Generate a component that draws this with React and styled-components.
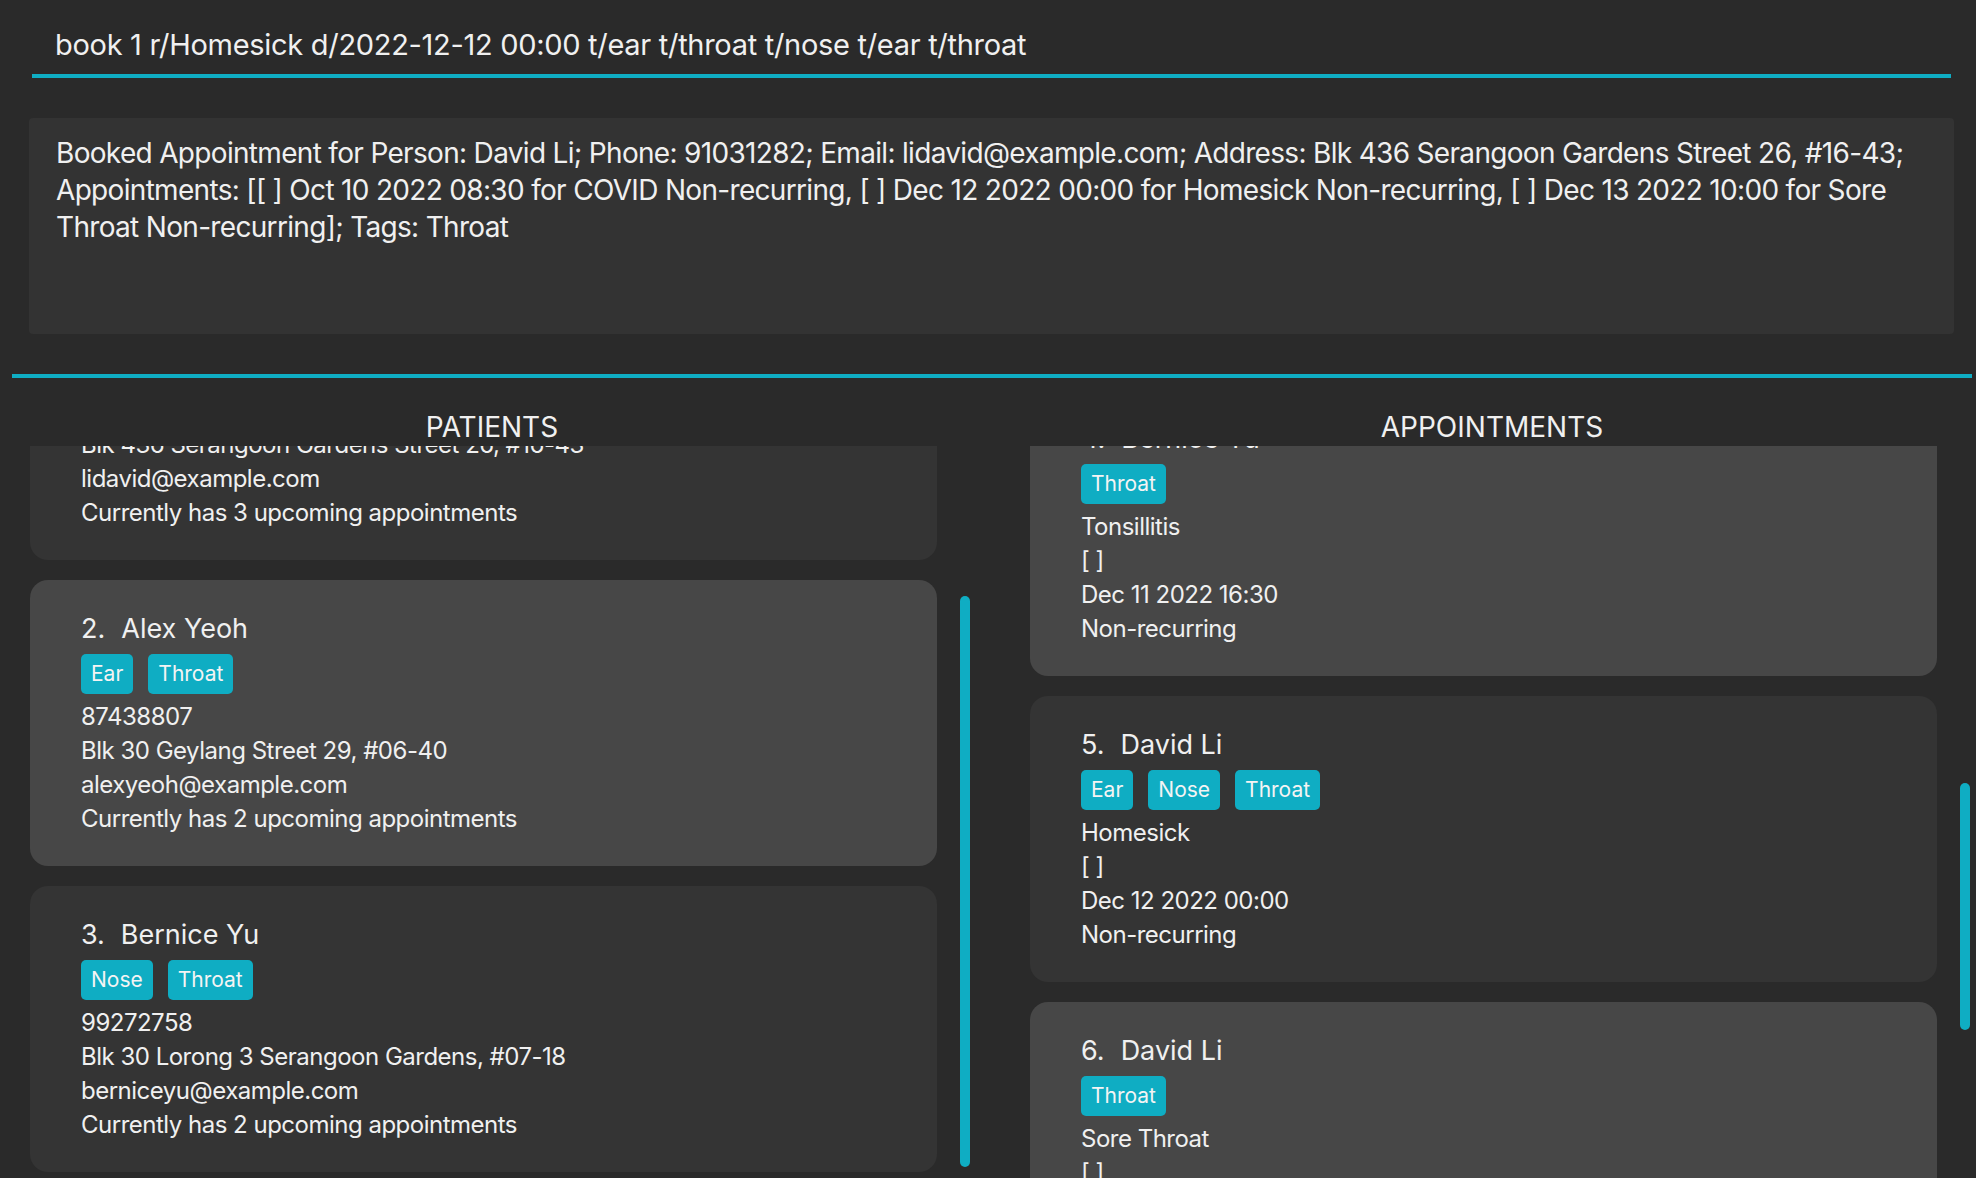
import { useLayoutEffect, useRef, useState } from "react"
import styled, { createGlobalStyle } from "styled-components"

const CYAN = "#0fadc3"

const GlobalStyle = createGlobalStyle`
  html, body {
    margin: 0;
    padding: 0;
    background: #2a2a2a;
    overflow: hidden;
  }
  body {
    font-family: Inter, "Noto Sans", sans-serif;
    color: #f0f0f0;
  }
`

const Window = styled.div`
  height: 1178px;
  display: flex;
  flex-direction: column;
`

const CommandBox = styled.div`
  margin: 0 25px 0 32px;
  padding: 28px 0 12px 23px;
  border-bottom: 4px solid ${CYAN};
  font-size: 29px;
  line-height: 34px;
  letter-spacing: -0.3px;
  white-space: nowrap;
`

const ResultBox = styled.div`
  margin: 40px 22px 0 29px;
  height: 216px;
  box-sizing: border-box;
  padding: 17px 27px;
  background: #333333;
  border-radius: 4px;
  font-size: 28px;
  line-height: 37px;
  letter-spacing: -0.68px;
`

const Divider = styled.div`
  margin: 40px 4px 0 12px;
  height: 4px;
  background: ${CYAN};
`

const Panels = styled.div`
  flex: 1;
  min-height: 0;
  display: grid;
  grid-template-columns: 960px 960px;
  column-gap: 40px;
  margin-left: 12px;
`

const Column = styled.section`
  display: flex;
  flex-direction: column;
  min-height: 0;
`

const Title = styled.h2`
  margin: 0;
  padding: 32px 0 2px;
  text-align: center;
  font-size: 28px;
  line-height: 34px;
  font-weight: 400;
`

const ListBody = styled.div`
  flex: 1;
  min-height: 0;
  display: flex;
`

const Scroller = styled.div`
  flex: 1;
  min-width: 0;
  overflow: hidden;
  padding: 20px 21px 20px 18px;
  display: flex;
  flex-direction: column;
  gap: 20px;
`

const Track = styled.div`
  position: relative;
  width: 14px;
  flex: none;
`

const Thumb = styled.div`
  position: absolute;
  left: 2px;
  width: 10px;
  border-radius: 5px;
  background: ${CYAN};
`

const Card = styled.div`
  flex: none;
  background: ${p => (p.$light ? "#474747" : "#343434")};
  border-radius: 18px;
  padding: 32px 40px 30px 51px;
`

const Name = styled.div`
  font-size: 27px;
  line-height: 34px;
  display: flex;
  gap: 16px;
`

const Tags = styled.div`
  margin: 8px 0 6px;
  display: flex;
  gap: 15px;
`

const Tag = styled.span`
  background: ${CYAN};
  color: #f4f4f4;
  height: 40px;
  padding: 0 10px;
  border-radius: 5px;
  font-size: 21px;
  line-height: 40px;
`

const Line = styled.div`
  font-size: 24px;
  line-height: 34px;
  letter-spacing: -0.5px;
`

const patients = [
  { name: "David Li", tags: ["Throat"], phone: "91031282", address: "Blk 436 Serangoon Gardens Street 26, #16-43", email: "lidavid@example.com", count: 3 },
  { name: "Alex Yeoh", tags: ["Ear", "Throat"], phone: "87438807", address: "Blk 30 Geylang Street 29, #06-40", email: "alexyeoh@example.com", count: 2 },
  { name: "Bernice Yu", tags: ["Nose", "Throat"], phone: "99272758", address: "Blk 30 Lorong 3 Serangoon Gardens, #07-18", email: "berniceyu@example.com", count: 2 },
]

const appointments = [
  { name: "David Li", tags: ["Throat"], reason: "COVID", date: "Oct 10 2022 08:30" },
  { name: "Alex Yeoh", tags: ["Ear"], reason: "Ear Infection", date: "Nov 02 2022 14:00" },
  { name: "Bernice Yu", tags: ["Nose"], reason: "Sinusitis", date: "Nov 21 2022 09:15" },
  { name: "Bernice Yu", tags: ["Throat"], reason: "Tonsillitis", date: "Dec 11 2022 16:30" },
  { name: "David Li", tags: ["Ear", "Nose", "Throat"], reason: "Homesick", date: "Dec 12 2022 00:00" },
  { name: "David Li", tags: ["Throat"], reason: "Sore Throat", date: "Dec 13 2022 10:00" },
  { name: "Alex Yeoh", tags: ["Ear"], reason: "Follow-up", date: "Dec 20 2022 11:00" },
]

// scrolled list with a drawn scrollbar whose thumb follows the real scroll metrics
const ScrollList = ({ offset, children }) => {
  const ref = useRef(null)
  const [thumb, setThumb] = useState({ top: 0, height: 0 })

  useLayoutEffect(() => {
    const el = ref.current
    if (!el) return
    el.scrollTop = offset
    const ch = el.clientHeight
    const sh = el.scrollHeight
    setThumb({ top: (el.scrollTop * ch) / sh, height: (ch * ch) / sh })
  }, [offset])

  return (
    <ListBody>
      <Scroller ref={ref}>{children}</Scroller>
      <Track>
        <Thumb style={{ top: thumb.top, height: thumb.height }} />
      </Track>
    </ListBody>
  )
}

const TagRow = ({ tags }) => (
  <Tags>
    {tags.map(t => <Tag key={t}>{t}</Tag>)}
  </Tags>
)

const PatientCard = ({ index, p }) => (
  <Card $light={index % 2 === 0}>
    <Name><span>{index}.</span><span>{p.name}</span></Name>
    <TagRow tags={p.tags} />
    <Line>{p.phone}</Line>
    <Line>{p.address}</Line>
    <Line>{p.email}</Line>
    <Line>Currently has {p.count} upcoming appointments</Line>
  </Card>
)

const AppointmentCard = ({ index, a }) => (
  <Card $light={index % 2 === 0}>
    <Name><span>{index}.</span><span>{a.name}</span></Name>
    <TagRow tags={a.tags} />
    <Line>{a.reason}</Line>
    <Line>[ ]</Line>
    <Line>{a.date}</Line>
    <Line>Non-recurring</Line>
  </Card>
)

export default function App() {
  return (
    <Window>
      <GlobalStyle />
      <CommandBox>book 1 r/Homesick d/2022-12-12 00:00 t/ear t/throat t/nose t/ear t/throat</CommandBox>
      <ResultBox>
        Booked Appointment for Person: David Li; Phone: 91031282; Email: lidavid@example.com; Address: Blk 436 Serangoon Gardens Street 26, #16-43; Appointments: [[ ] Oct 10 2022 08:30 for COVID Non-recurring, [ ] Dec 12 2022 00:00 for Homesick Non-recurring, [ ] Dec 13 2022 10:00 for Sore Throat Non-recurring]; Tags: Throat
      </ResultBox>
      <Divider />
      <Panels>
        <Column>
          <Title>PATIENTS</Title>
          <ScrollList offset={192}>
            {patients.map((p, i) => <PatientCard key={i} index={i + 1} p={p} />)}
          </ScrollList>
        </Column>
        <Column>
          <Title>APPOINTMENTS</Title>
          <ScrollList offset={994}>
            {appointments.map((a, i) => <AppointmentCard key={i} index={i + 1} a={a} />)}
          </ScrollList>
        </Column>
      </Panels>
    </Window>
  )
}
